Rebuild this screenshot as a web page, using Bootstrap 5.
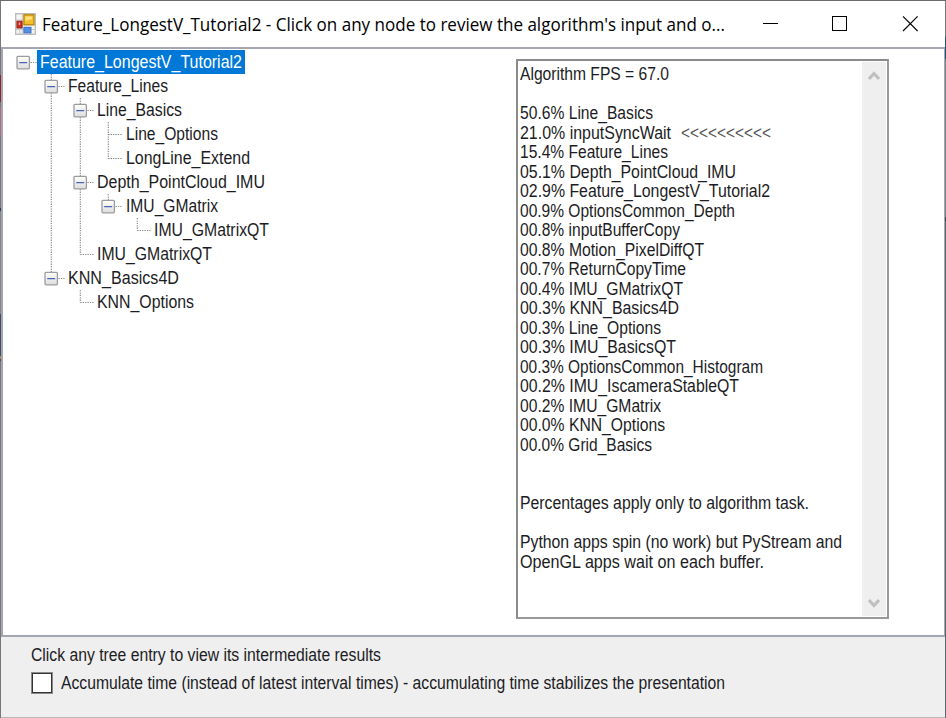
<!DOCTYPE html>
<html lang="en">
<head>
<meta charset="utf-8">
<title>Feature_LongestV_Tutorial2</title>
<link href="https://cdn.jsdelivr.net/npm/bootstrap@5.3.0/dist/css/bootstrap.min.css" rel="stylesheet">
<style>
html,body{height:100%;overflow:hidden}
body{font-family:"Liberation Sans",Arial,sans-serif;font-size:17.5px;color:#1c1c24;background:#fff}
.win{height:718px;padding:1px;background:
  linear-gradient(#6b696b,#6b696b) 0 0/100% 1px no-repeat,
  linear-gradient(#777 75px,#8c2326 75px 102px,#777 102px 107px,#b06c7b 107px 136px,#777 136px 208px,#303a5c 208px 211px,#858585 211px 314px,#454a60 314px 356px,#b08a4a 356px 359px,#454a60 359px 361px,#777 361px) 0 0/1px 100% no-repeat,
  linear-gradient(#777 37px,#234f7a 37px 59px,#7b8287 59px 217px,#444 217px 221px,#60676c 221px) 100% 0/1px 100% no-repeat,
  #b8b8b8}
.titlebar{height:46px;padding-left:14px}
.caption{font-family:"Open Sans","Noto Sans",sans-serif;font-size:18px;color:#000;line-height:24px;margin-left:6px}
.ctl{width:70px;height:46px}
.client{height:590px;border:2px solid #a3a5b1;border-right-width:1px}
.tree{width:513px;padding:1px 0 0 5.7px}
.trow{height:24px}
.trow svg{width:28.6px;height:24px;flex:none;display:block}
.lbl{height:24px;line-height:25px;padding:0 3px 0 2.5px;white-space:pre}
.lbl.sel{background:#0078d7;color:#fff}
.fit{display:inline-block;white-space:pre;transform-origin:0 50%;vertical-align:top}
.report{width:373px;height:560px;margin-top:10px;border:2px solid #8b8b8b;border-right-color:#999;border-bottom-color:#999}
.lines{padding:4px 0 0 2px;line-height:19.53px}
.lines div{height:19.53px}
.arrows{margin-left:10px;color:#555}
.sbar{width:24px;margin:1px;background:#efefef;padding:9px 0 8px}
.foot{padding:6px 0 0 30px;background:#efefef}
.foot .hint{height:24px;line-height:24px}
.foot .opt{height:32px;line-height:32px}
.box{width:20px;height:20px;border:1.5px solid #333;outline:.5px solid #8a8a8a;border-radius:0;background:#fff;margin:0 9px 0 1px}
</style>
</head>
<body>
<svg width="0" height="0" class="position-absolute">
<defs>
<linearGradient id="bg" x1="0" y1="0" x2="0" y2="1"><stop offset="0" stop-color="#fff"/><stop offset="1" stop-color="#ddd"/></linearGradient>
<symbol id="pass" viewBox="0 0 28.6 24"><path d="M14.3 0V24" stroke="#858585" stroke-width="1.1" stroke-dasharray="1.3 1.1"/></symbol>
<symbol id="ell" viewBox="0 0 28.6 24"><path d="M14.3 0V12.5M14.3 12.5H28" fill="none" stroke="#858585" stroke-width="1.1" stroke-dasharray="1.3 1.1"/></symbol>
<symbol id="tee" viewBox="0 0 28.6 24"><path d="M14.3 0V24M14.3 12.5H28" fill="none" stroke="#858585" stroke-width="1.1" stroke-dasharray="1.3 1.1"/></symbol>
<symbol id="minus" viewBox="0 0 28.6 24"><path d="M21.5 12.5H27.5" stroke="#858585" stroke-width="1.1" stroke-dasharray="1.3 1.1"/><rect x="8" y="6.4" width="12.4" height="12.4" rx="1" fill="url(#bg)" stroke="#9c9c9c" stroke-width="1.3"/><path d="M10.2 12.6H18.2" stroke="#4a63b5" stroke-width="1.3"/></symbol>
<symbol id="minusup" viewBox="0 0 28.6 24"><path d="M14.3 0V6" stroke="#858585" stroke-width="1.1" stroke-dasharray="1.3 1.1"/><use href="#minus" width="28.6" height="24"/></symbol>
<symbol id="minustee" viewBox="0 0 28.6 24"><path d="M14.3 0V24" stroke="#858585" stroke-width="1.1" stroke-dasharray="1.3 1.1"/><use href="#minus" width="28.6" height="24"/></symbol>
</defs>
</svg>
<div class="win d-flex flex-column">
  <header class="titlebar d-flex align-items-center bg-white flex-shrink-0">
    <svg width="21" height="22" viewBox="0 0 22 22" preserveAspectRatio="none">
      <rect x=".7" y=".7" width="20.6" height="20.6" fill="#f4f4f4" stroke="#bcbcbc" stroke-width="1.4"/>
      <path d="M1 7H8M7.6 1V21M1 16.5H21M5 16V21M16.5 14V21" stroke="#c8c8c8" fill="none"/>
      <rect x="9.3" y="1.8" width="10.6" height="10" fill="#f3c02c" stroke="#b68209" stroke-width="1.3"/>
      <path d="M11 3.5H18V6L11 8Z" fill="#ffe07a"/>
      <rect x="2" y="8.2" width="5.4" height="6.8" fill="#c92b22" stroke="#9c2319"/>
      <path d="M4.7 9.5V12" stroke="#f4a79a" stroke-width="1.5"/>
      <rect x="9.3" y="14.3" width="7.4" height="5.6" fill="#5590e5" stroke="#3c6fc4"/>
    </svg>
    <div class="caption me-auto"><span class="fit" data-w="683">Feature_LongestV_Tutorial2 - Click on any node to review the algorithm's input and o...</span></div>
    <svg class="ctl" viewBox="0 0 70 46"><path d="M28 22.5H43" stroke="#000"/></svg>
    <svg class="ctl" viewBox="0 0 70 46"><rect x="27.5" y="15.5" width="14" height="14" fill="none" stroke="#000"/></svg>
    <svg class="ctl" viewBox="0 0 70 46"><path d="M28 15.3L42.6 30M42.6 15.3L28 30" stroke="#000" stroke-width="1.1"/></svg>
  </header>
  <main class="client d-flex bg-white flex-shrink-0">
    <div class="tree flex-shrink-0">
      <div class="trow d-flex"><svg><use href="#minus"/></svg><div class="lbl sel"><span class="fit" data-w="202">Feature_LongestV_Tutorial2</span></div></div>
      <div class="trow d-flex"><svg></svg><svg><use href="#minustee"/></svg><div class="lbl"><span class="fit" data-w="100">Feature_Lines</span></div></div>
      <div class="trow d-flex"><svg></svg><svg><use href="#pass"/></svg><svg><use href="#minustee"/></svg><div class="lbl"><span class="fit" data-w="85">Line_Basics</span></div></div>
      <div class="trow d-flex"><svg></svg><svg><use href="#pass"/></svg><svg><use href="#pass"/></svg><svg><use href="#tee"/></svg><div class="lbl"><span class="fit" data-w="92">Line_Options</span></div></div>
      <div class="trow d-flex"><svg></svg><svg><use href="#pass"/></svg><svg><use href="#pass"/></svg><svg><use href="#ell"/></svg><div class="lbl"><span class="fit" data-w="124">LongLine_Extend</span></div></div>
      <div class="trow d-flex"><svg></svg><svg><use href="#pass"/></svg><svg><use href="#minustee"/></svg><div class="lbl"><span class="fit" data-w="168">Depth_PointCloud_IMU</span></div></div>
      <div class="trow d-flex"><svg></svg><svg><use href="#pass"/></svg><svg><use href="#pass"/></svg><svg><use href="#minusup"/></svg><div class="lbl"><span class="fit" data-w="92">IMU_GMatrix</span></div></div>
      <div class="trow d-flex"><svg></svg><svg><use href="#pass"/></svg><svg><use href="#pass"/></svg><svg></svg><svg><use href="#ell"/></svg><div class="lbl"><span class="fit" data-w="115">IMU_GMatrixQT</span></div></div>
      <div class="trow d-flex"><svg></svg><svg><use href="#pass"/></svg><svg><use href="#ell"/></svg><div class="lbl"><span class="fit" data-w="115">IMU_GMatrixQT</span></div></div>
      <div class="trow d-flex"><svg></svg><svg><use href="#minusup"/></svg><div class="lbl"><span class="fit" data-w="111">KNN_Basics4D</span></div></div>
      <div class="trow d-flex"><svg></svg><svg></svg><svg><use href="#ell"/></svg><div class="lbl"><span class="fit" data-w="97">KNN_Options</span></div></div>
    </div>
    <section class="report d-flex">
      <div class="lines flex-grow-1">
        <div><span class="fit" data-w="149">Algorithm FPS = 67.0</span></div>
        <div></div>
        <div><span class="fit" data-w="133">50.6% Line_Basics</span></div>
        <div><span class="fit" data-w="151">21.0% inputSyncWait</span><span class="fit arrows" data-w="90">&lt;&lt;&lt;&lt;&lt;&lt;&lt;&lt;&lt;&lt;</span></div>
        <div><span class="fit" data-w="148">15.4% Feature_Lines</span></div>
        <div><span class="fit" data-w="216">05.1% Depth_PointCloud_IMU</span></div>
        <div><span class="fit" data-w="250">02.9% Feature_LongestV_Tutorial2</span></div>
        <div><span class="fit" data-w="215">00.9% OptionsCommon_Depth</span></div>
        <div><span class="fit" data-w="160">00.8% inputBufferCopy</span></div>
        <div><span class="fit" data-w="184">00.8% Motion_PixelDiffQT</span></div>
        <div><span class="fit" data-w="166">00.7% ReturnCopyTime</span></div>
        <div><span class="fit" data-w="163">00.4% IMU_GMatrixQT</span></div>
        <div><span class="fit" data-w="159">00.3% KNN_Basics4D</span></div>
        <div><span class="fit" data-w="141">00.3% Line_Options</span></div>
        <div><span class="fit" data-w="156">00.3% IMU_BasicsQT</span></div>
        <div><span class="fit" data-w="243">00.3% OptionsCommon_Histogram</span></div>
        <div><span class="fit" data-w="219">00.2% IMU_IscameraStableQT</span></div>
        <div><span class="fit" data-w="141">00.2% IMU_GMatrix</span></div>
        <div><span class="fit" data-w="145">00.0% KNN_Options</span></div>
        <div><span class="fit" data-w="132">00.0% Grid_Basics</span></div>
        <div></div>
        <div></div>
        <div><span class="fit" data-w="289">Percentages apply only to algorithm task.</span></div>
        <div></div>
        <div><span class="fit" data-w="322">Python apps spin (no work) but PyStream and</span></div>
        <div><span class="fit" data-w="244">OpenGL apps wait on each buffer.</span></div>
      </div>
      <div class="sbar d-flex flex-column justify-content-between align-items-center">
        <svg width="12" height="10" viewBox="0 0 12 10"><path d="M1 8L6 2.5L11 8" fill="none" stroke="#bfbfbf" stroke-width="3"/></svg>
        <svg width="12" height="10" viewBox="0 0 12 10"><path d="M1 2L6 7.5L11 2" fill="none" stroke="#bfbfbf" stroke-width="3"/></svg>
      </div>
    </section>
  </main>
  <footer class="foot flex-grow-1">
    <div class="hint"><span class="fit" data-w="350">Click any tree entry to view its intermediate results</span></div>
    <div class="opt d-flex align-items-center"><span class="box flex-shrink-0"></span><span class="fit" data-w="664">Accumulate time (instead of latest interval times) - accumulating time stabilizes the presentation</span></div>
  </footer>
</div>
<script src="https://cdn.jsdelivr.net/npm/bootstrap@5.3.0/dist/js/bootstrap.bundle.min.js"></script>
<script>
// Condense each label horizontally to its measured width.
document.querySelectorAll('.fit').forEach(function (el) {
  var w = el.getBoundingClientRect().width;
  el.style.width = el.dataset.w + 'px';
  el.style.transform = 'scaleX(' + (el.dataset.w / w).toFixed(4) + ')';
});
</script>
</body>
</html>
